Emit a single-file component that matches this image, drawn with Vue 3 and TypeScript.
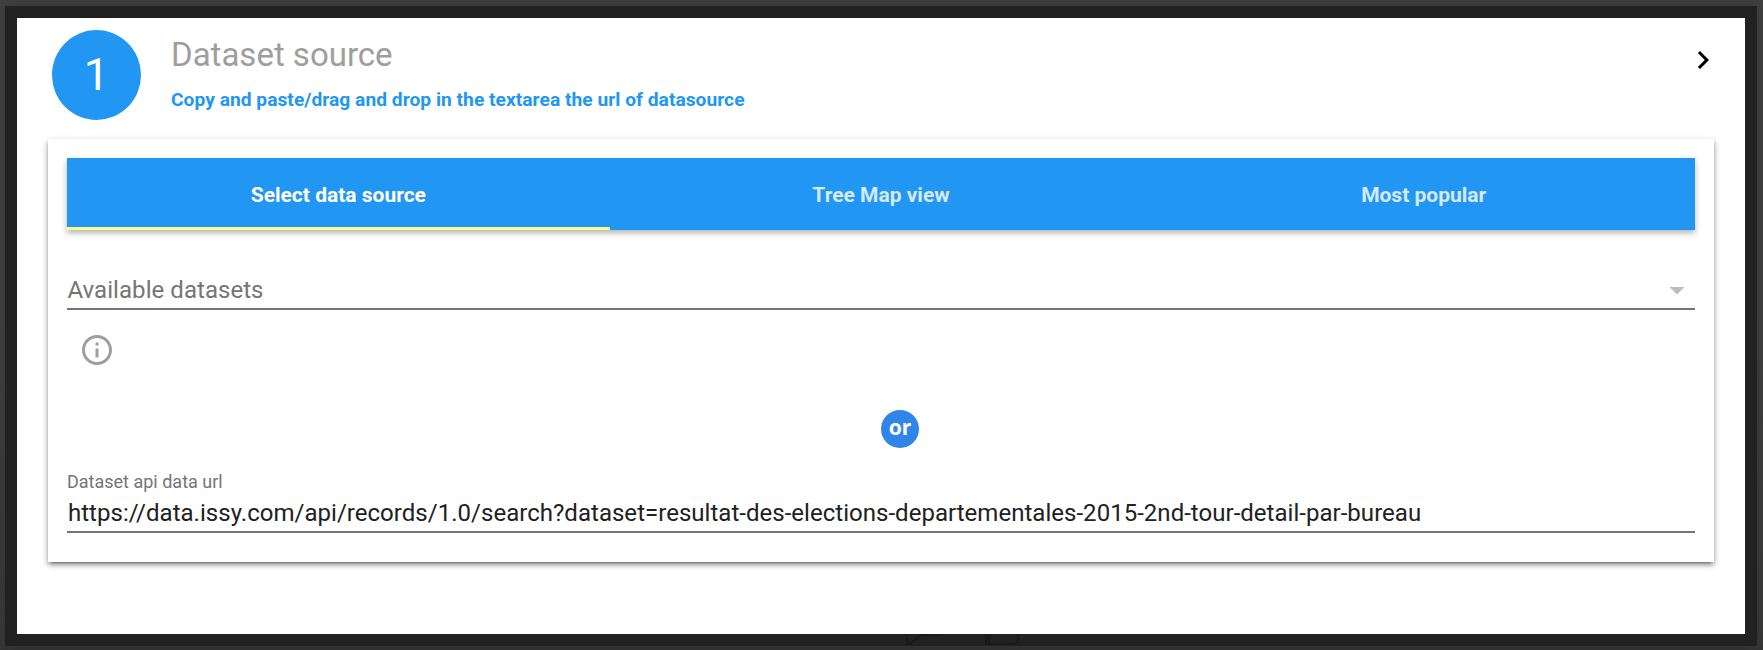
<script setup lang="ts">
import { ref } from 'vue'

const tabs: string[] = ['Select data source', 'Tree Map view', 'Most popular']
const selected = ref(0)
const url = ref('https://data.issy.com/api/records/1.0/search?dataset=resultat-des-elections-departementales-2015-2nd-tour-detail-par-bureau')
</script>

<template>
  <div class="backdrop">
    <main class="dialog">
      <header class="head">
        <div class="step"><span>1</span></div>
        <div class="titles">
          <h1>Dataset source</h1>
          <p>Copy and paste/drag and drop in the textarea the url of datasource</p>
        </div>
        <svg class="chevron" viewBox="0 0 24 24"><path d="M10 6L8.59 7.41 13.17 12l-4.58 4.59L10 18l6-6z" /></svg>
      </header>
      <section class="card">
        <nav class="tabs">
          <button v-for="(tab, i) in tabs" :key="tab" class="tab" :class="{ active: i === selected }" @click="selected = i"><span>{{ tab }}</span></button>
        </nav>
        <div class="dropdown">
          <span>Available datasets</span>
          <svg viewBox="0 0 24 24"><path d="M7 10l5 5 5-5z" /></svg>
        </div>
        <svg class="info" viewBox="0 0 24 24"><path d="M11 17h2v-6h-2v6zm1-15C6.48 2 2 6.48 2 12s4.48 10 10 10 10-4.48 10-10S17.52 2 12 2zm0 18c-4.41 0-8-3.59-8-8s3.59-8 8-8 8 3.59 8 8-3.59 8-8 8zM11 9h2V7h-2v2z" /></svg>
        <div class="or"><span>or</span></div>
        <label class="field">
          <span class="caption">Dataset api data url</span>
          <span class="value">{{ url }}</span>
        </label>
      </section>
    </main>
    <svg class="ghost" viewBox="0 0 120 12">
      <path d="M35 1H15L4 10H1V0M80 0V10H109Q113 8 112 0M83 0V10" />
    </svg>
  </div>
</template>

<style>
body {
  margin: 0;
  overflow: hidden;
}
</style>

<style scoped>
* {
  box-sizing: border-box;
}
.backdrop {
  position: relative;
  width: 1763px;
  height: 650px;
  padding: 6px 6px 4px 5px;
  background: linear-gradient(#404040 0, #404040 320px, #393838 640px, #353434 650px);
  font-family: Roboto, "Liberation Sans", sans-serif;
}
.dialog {
  width: 1752px;
  height: 640px;
  padding: 12px 31px 0;
  border: 12px solid #212121;
  background: #fff;
  box-shadow: 0 0 14px rgba(0, 0, 0, 0.14);
}
.head {
  display: flex;
  height: 109px;
  margin-left: 4px;
}
.step {
  display: flex;
  flex: none;
  align-items: center;
  justify-content: center;
  width: 89px;
  height: 90px;
  border-radius: 50%;
  background: #2196f3;
  color: #fff;
  font-size: 45px;
  line-height: 52px;
}
.titles {
  flex: 1;
  margin-left: 30px;
}
h1 {
  margin: 5px 0 0;
  color: #9e9e9e;
  font-size: 33px;
  font-weight: 400;
  line-height: 40px;
}
p {
  margin: 13px 0 0;
  color: #2196f3;
  font-size: 19.2px;
  font-weight: 700;
  letter-spacing: 0.03px;
  line-height: 24px;
}
.chevron {
  width: 36px;
  height: 36px;
  margin: 12px -7px 0 0;
}
.card {
  width: 1666px;
  height: 423px;
  padding: 19px;
  background: #fff;
  box-shadow: 0 3px 3px 0 rgba(0, 0, 0, 0.14), 0 1.5px 7.5px 0 rgba(0, 0, 0, 0.12), 0 4.5px 1.5px -3px rgba(0, 0, 0, 0.2), 0 3px 6px rgba(0, 0, 0, 0.25);
}
.tabs {
  display: grid;
  grid-template-columns: repeat(3, 1fr);
  height: 72px;
  background: #2196f3;
  box-shadow: 0 3px 6px rgba(0, 0, 0, 0.3);
}
.tab {
  padding: 5px 0 0;
  border: 0;
  border-bottom: 3px solid transparent;
  background: none;
  color: #fff;
  font: 700 21px/24px Roboto, sans-serif;
}
.tab.active {
  border-bottom-color: #ffff8d;
}
.tab:not(.active) span {
  opacity: 0.8;
}
.dropdown {
  display: flex;
  align-items: center;
  justify-content: space-between;
  height: 36px;
  margin-top: 42px;
  color: #757575;
  font-size: 24px;
  letter-spacing: 0.05px;
}
.dropdown span {
  padding-left: 0.5px;
}
.dropdown svg {
  width: 36px;
  height: 36px;
  fill: #bdbdbd;
}
.dropdown,
.value {
  border-bottom: 2px solid #757575;
  box-sizing: content-box;
}
.info {
  display: block;
  width: 36px;
  height: 36px;
  margin: 22px 0 0 12px;
  fill: #9e9e9e;
}
.or {
  display: flex;
  align-items: center;
  justify-content: center;
  width: 38px;
  height: 38px;
  margin: 42px 0 0 814px;
  border-radius: 50%;
  background: #3086e8;
  color: #fff;
  font: 700 21px/24px "Noto Sans", sans-serif;
}
.or span {
  margin-top: -4px;
}
.field {
  display: block;
  margin-top: 21px;
}
.caption {
  display: block;
  height: 26px;
  color: #757575;
  font-size: 18px;
  line-height: 26px;
}
.value {
  display: block;
  height: 36px;
  padding-left: 1px;
  color: #212121;
  font-size: 24px;
  letter-spacing: 0.027px;
  line-height: 36px;
}
.ghost {
  position: absolute;
  left: 906px;
  top: 634px;
  width: 120px;
  height: 12px;
  fill: none;
  stroke: #191919;
  stroke-width: 2;
}
</style>
